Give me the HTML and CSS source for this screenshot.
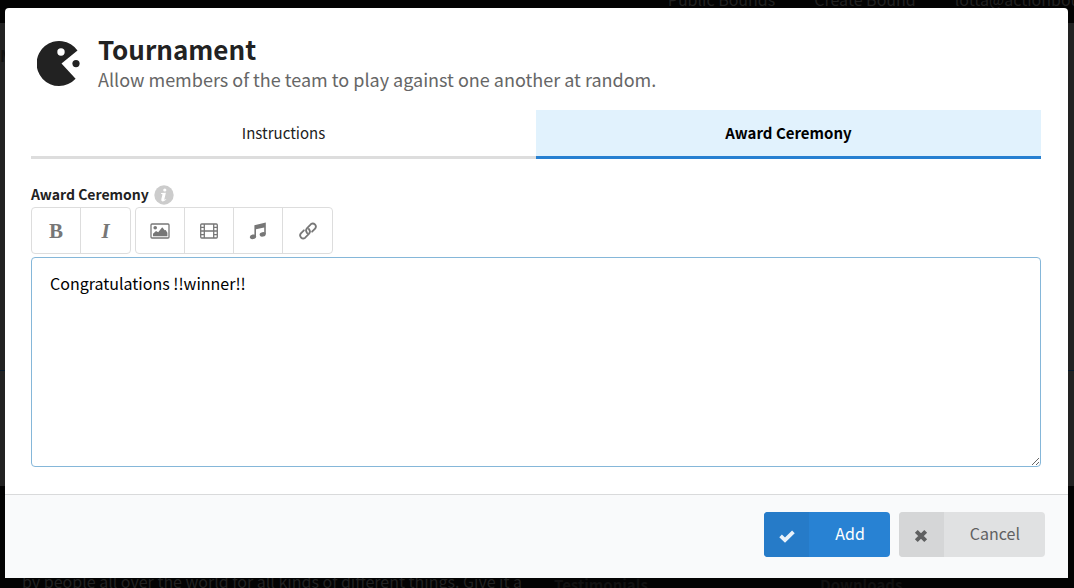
FILE: index.html
```html
<!DOCTYPE html>
<html lang="en">
<head>
<meta charset="utf-8">
<meta name="viewport" content="width=device-width, initial-scale=1">
<title>Tournament</title>
<link rel="stylesheet" href="styles.css">
</head>
<body>
<div class="page" aria-hidden="true">
  <div class="page-nav"><span>Public Bounds</span><span>Create Bound</span><span>lotta@actionbound</span></div>
  <div class="page-main"><span class="page-heading">M</span><div class="page-rule"></div></div>
  <div class="page-footer">
    <p class="footer-about">by people all over the world for all kinds of different things. Give it a</p>
    <p class="footer-col">Testimonials</p>
    <p class="footer-col">Downloads</p>
  </div>
</div>
<div class="overlay">
  <form class="modal" role="dialog" aria-labelledby="modal-title">
    <div class="modal-body">
      <header class="modal-header">
        <svg class="logo" viewBox="0 0 44 46" aria-hidden="true">
          <path fill="#222" d="M40.5 9.6A22.5 22.5 0 1 0 38.6 37.8L24.5 22.5Z"/>
          <circle cx="24" cy="11" r="3.7" fill="#fff"/>
          <circle cx="39" cy="22.6" r="3.6" fill="#222"/>
        </svg>
        <div>
          <h1 class="title" id="modal-title">Tournament</h1>
          <p class="subtitle">Allow members of the team to play against one another at random.</p>
        </div>
      </header>
      <div class="tabs" role="tablist">
        <button type="button" class="tab" role="tab" aria-selected="false">Instructions</button>
        <button type="button" class="tab tab-active" role="tab" aria-selected="true">Award Ceremony</button>
      </div>
      <div class="field-label">
        <label for="ceremony">Award Ceremony</label>
        <svg class="info" viewBox="0 0 20 20" aria-hidden="true">
          <circle cx="10" cy="10" r="9.7" fill="#ccc"/>
          <circle cx="10.8" cy="5" r="1.6" fill="#fff"/>
          <path fill="#fff" d="M7.2 8.1 11.9 7.7 10.4 14q-.2 1 .5.7l1.1-.7.3.6q-1.8 1.9-3.6 1.8-1.9-.1-1.4-2.2l1.1-4.5q.2-.7-.5-.7h-.9Z"/>
        </svg>
      </div>
      <div class="toolbar">
        <div class="group">
          <button type="button" class="tool tool-bold" aria-label="Bold">B</button>
          <button type="button" class="tool tool-italic" aria-label="Italic">I</button>
        </div>
        <div class="group">
          <button type="button" class="tool" aria-label="Image">
            <svg class="icon" viewBox="0 0 20 20"><rect x="1" y="3" width="18" height="14" rx="1" fill="none" stroke="currentColor" stroke-width="1.3"/><circle cx="5.2" cy="6.7" r="1.8" fill="currentColor"/><path fill="currentColor" d="M3 15.2v-2.5l3-2.7 2.2 1.3 4-5.1 2.5 3.1 1-.4 1.7 2.8v3.5Z"/></svg>
          </button>
          <button type="button" class="tool" aria-label="Video">
            <svg class="icon" viewBox="0 0 20 20" fill="none" stroke="currentColor" stroke-width="1.3"><rect x="1.7" y="3" width="16.6" height="14" rx="1"/><path d="M5.3 3v14M14.7 3v14M5.3 10h9.4M1.7 6.4h3.6M1.7 10h3.6M1.7 13.6h3.6M14.7 6.4h3.6M14.7 10h3.6M14.7 13.6h3.6"/></svg>
          </button>
          <button type="button" class="tool" aria-label="Audio">
            <svg class="icon" viewBox="0 0 20 20" fill="currentColor"><path d="M6.4 4.2 17.8 1.6V13h-1.6V6.4L8 8.3v7.4H6.4Z"/><ellipse cx="5" cy="15.8" rx="3.2" ry="2.3" transform="rotate(-12 5 15.8)"/><ellipse cx="14.7" cy="13.4" rx="3.1" ry="2.2" transform="rotate(-12 14.7 13.4)"/></svg>
          </button>
          <button type="button" class="tool" aria-label="Link">
            <svg class="icon" viewBox="0 0 20 20" fill="none" stroke="currentColor" stroke-width="1.8" stroke-linecap="round"><path d="M9.2 12.2Q6.9 9.4 9.1 7.1L13 3.1A3.1 3.1 0 0 1 17.3 7.4L14.1 10.7"/><path d="M10.8 7.9Q13.1 10.6 10.9 12.9L7 16.9A3.1 3.1 0 0 1 2.7 12.6L5.9 9.3"/></svg>
          </button>
        </div>
      </div>
      <textarea class="editor" id="ceremony" spellcheck="false">Congratulations !!winner!!</textarea>
    </div>
    <footer class="modal-footer">
      <button type="submit" class="action action-add">
        <span class="action-icon"><svg viewBox="0 0 16 16" aria-hidden="true"><path fill="none" stroke="currentColor" stroke-width="3.8" d="M1.6 7.8 6 12 14.4 3.8"/></svg></span>
        <span class="action-text">Add</span>
      </button>
      <button type="button" class="action action-cancel">
        <span class="action-icon"><svg viewBox="0 0 16 16" aria-hidden="true"><path fill="none" stroke="currentColor" stroke-width="4" stroke-linejoin="round" d="m3.3 3.3 9.4 9.4M12.7 3.3l-9.4 9.4"/></svg></span>
        <span class="action-text">Cancel</span>
      </button>
    </footer>
  </form>
</div>
</body>
</html>
```
FILE: styles.css
```css
* { box-sizing: border-box; }

body {
  margin: 0;
  background: #030303;
  color: #222;
  font-family: "Noto Sans CJK SC", "Open Sans", sans-serif;
  font-size: 16px;
  line-height: 20px;
}

button, textarea { font: inherit; }

h1, p { margin: 0; }

/* Dimmed page behind the dialog */
.page {
  display: flex;
  flex-direction: column;
  height: 100vh;
  overflow: hidden;
  color: #222;
}

.page-nav {
  display: flex;
  flex: none;
  justify-content: flex-end;
  align-items: flex-end;
  gap: 39px;
  height: 23px;
  margin-right: -26px;
  padding-bottom: 14px;
  white-space: nowrap;
}

.page-main {
  flex: 1;
  padding-top: 20px;
  background: #222;
}

.page-heading {
  display: block;
  color: #111;
  font-weight: bold;
  line-height: 24px;
}

.page-rule {
  margin-top: 303px;
  border-top: 1px solid #07192a;
}

.page-footer {
  display: grid;
  grid-template-columns: 532px 266px 1fr;
  flex: none;
  height: 102px;
  padding: 85px 0 0 22px;
  white-space: nowrap;
}

.footer-col {
  color: #111;
  font-size: 15px;
  font-weight: bold;
  line-height: 28px;
}

.overlay {
  position: absolute;
  inset: 0;
  padding: 8px 6px 10px 5px;
}

.modal {
  display: flex;
  flex-direction: column;
  min-height: 100%;
  overflow: hidden;
  border-radius: 4px 4px 0 0;
  background: #fff;
}

.modal-body {
  flex: 1;
  padding: 25px 27px 27px 26px;
}

.modal-header {
  display: flex;
  gap: 17px;
  padding-left: 6px;
}

.logo {
  width: 44px;
  height: 46px;
  margin-top: 8px;
}

.title {
  font-size: 26px;
  line-height: 32px;
}

.subtitle {
  color: #666;
  font-size: 18px;
  line-height: 28px;
}

.tabs {
  display: flex;
  margin-top: 17px;
}

.tab {
  flex: 1;
  height: 49px;
  padding: 0;
  border: 0;
  border-bottom: 3px solid #ddd;
  background: #fff;
  color: #222;
  font-size: 15px;
}

.tab-active {
  border-color: #2780d1;
  background: #e1f2fd;
  color: #000;
  font-weight: bold;
}

.field-label {
  display: flex;
  gap: 5px;
  margin-top: 26px;
  font-size: 14px;
  font-weight: bold;
  line-height: 18px;
}

.info {
  width: 20px;
  height: 20px;
}

.toolbar {
  display: flex;
  gap: 4px;
  margin: 2px 0 3px;
}

.group {
  display: flex;
  border: 1px solid #ddd;
  border-radius: 4px;
}

.tool {
  display: grid;
  place-items: center;
  width: 49px;
  height: 45px;
  padding: 0;
  border: 0;
  background: transparent;
  color: #777;
}

.tool:not(:last-child) { border-right: 1px solid #ddd; }

.tool-bold, .tool-italic {
  font-family: "Liberation Serif", serif;
  font-size: 21px;
  font-weight: bold;
}

.tool-italic { font-style: italic; }

.icon {
  width: 20px;
  height: 20px;
}

.editor {
  display: block;
  width: 100%;
  height: 210px;
  padding: 15px 18px;
  border: 1px solid #85b7d9;
  border-radius: 4px;
  outline: 0;
  background: #fff;
  color: #000;
  resize: vertical;
}

.modal-footer {
  display: flex;
  justify-content: flex-end;
  gap: 9px;
  padding: 17px 23px 21px;
  border-top: 1px solid #d9dadb;
  background: #f9fafb;
}

.action {
  display: flex;
  height: 45px;
  padding: 0;
  overflow: hidden;
  border: 0;
  border-radius: 4px;
}

.action-icon {
  display: grid;
  place-items: center;
  width: 45px;
  height: 45px;
  padding-top: 3px;
}

.action-icon svg {
  width: 16px;
  height: 16px;
}

.action-text {
  padding: 0 25px 0 26px;
  line-height: 43px;
}

.action-add { background: #2882d3; color: #fff; }
.action-add .action-icon { background: #267bc8; color: #e9f2fa; }
.action-cancel { background: #e0e1e2; color: #5f6061; }
.action-cancel .action-icon { background: #d5d6d7; }
```
